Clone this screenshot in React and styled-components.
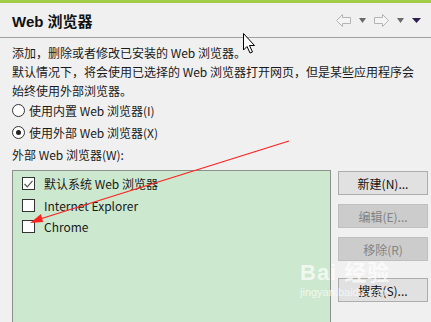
import React from 'react';
import styled, {createGlobalStyle} from 'styled-components';

const GlobalStyle = createGlobalStyle`
  html, body {
    margin: 0;
    padding: 0;
    background: #f0f0f0;
  }
  body {
    font-family: "Noto Sans CJK SC", "Noto Sans", sans-serif;
    font-size: 12px;
    color: #1a1a1a;
  }
`

const Page = styled.div`
  position: relative;
  width: 431px;
  height: 322px;
  overflow: hidden;
  display: flex;
  flex-direction: column;
`
const GreenStrip = styled.div`
  height: 3px;
  background: #a3cc48;
`
const Header = styled.div`
  height: 34px;
  display: flex;
  align-items: center;
  justify-content: space-between;
  padding: 0 10px 0 12px;
  border-bottom: 1px solid #a0a0a0;
`
const Title = styled.h1`
  margin: 0;
  font-size: 15px;
  font-weight: bold;
  color: #111;
  font-family: "Liberation Sans", "Noto Sans CJK SC", sans-serif;
`
const Nav = styled.div`
  display: flex;
  align-items: center;
  gap: 8px;
`
const Body = styled.div`
  flex: 1;
  display: flex;
  flex-direction: column;
  padding: 5px 3px 0 12px;
`
const Desc = styled.p`
  margin: 0;
  line-height: 19px;
`
const RadioRow = styled.label`
  display: flex;
  align-items: center;
  gap: 4px;
  height: 22px;
  margin-top: ${p => p.$first ? '-1px' : '0'};
`
const RadioCircle = styled.span`
  width: 11px;
  height: 11px;
  border: 1px solid #333;
  border-radius: 50%;
  background: #fff;
  display: flex;
  align-items: center;
  justify-content: center;
  &::after {
    content: '';
    display: ${p => p.$checked ? 'block' : 'none'};
    width: 5px;
    height: 5px;
    border-radius: 50%;
    background: #222;
  }
`
const GroupLabel = styled.div`
  margin-top: 1px;
  height: 22px;
  line-height: 22px;
`
const ListArea = styled.div`
  flex: 1;
  display: flex;
  gap: 7px;
  margin-top: 4px;
`
const ListBox = styled.div`
  flex: 1;
  background: #cce8cf;
  border: 1px solid #8c918c;
  border-bottom: none;
  padding: 2px 0 0 9px;
`
const CheckRow = styled.div`
  display: flex;
  align-items: center;
  gap: 9px;
  height: 21.5px;
`
const Box = styled.span`
  width: 11px;
  height: 11px;
  border: 1px solid #333;
  background: #fff;
  display: flex;
  align-items: center;
  justify-content: center;
`
const ButtonCol = styled.div`
  width: 90px;
  display: flex;
  flex-direction: column;
  padding-top: 1px;
`
const Button = styled.button`
  height: 24px;
  margin-bottom: ${p => p.$gap || 9}px;
  font-family: inherit;
  font-size: 12px;
  padding: 0;
  border: 1px solid ${p => p.disabled ? '#bfbfbf' : '#adadad'};
  background: ${p => p.disabled ? '#cccccc' : '#e1e1e1'};
  color: ${p => p.disabled ? '#838383' : '#111'};
`
const Overlay = styled.svg`
  position: absolute;
  left: 0;
  top: 0;
  pointer-events: none;
`
const Watermark = styled.div`
  position: absolute;
  left: 300px;
  top: 262px;
  color: rgba(255, 255, 255, 0.7);
  font-family: "Liberation Sans", "Noto Sans CJK SC", sans-serif;
  pointer-events: none;
  line-height: 1;
`
const WmBig = styled.div`
  font-size: 22px;
  font-weight: bold;
  letter-spacing: 1px;
`
const WmSmall = styled.div`
  font-size: 11px;
  margin-top: 3px;
`

const Arrow = ({dir}) => (
  <svg width="15" height="13" viewBox="0 0 15 13">
    {dir === 'left'
      ? <path d="M0.5 6.5 L6.5 0.5 V3.5 H14.5 V9.5 H6.5 V12.5 Z" fill="#f4f4f4" stroke="#b4b4b4"/>
      : <path d="M14.5 6.5 L8.5 0.5 V3.5 H0.5 V9.5 H8.5 V12.5 Z" fill="#f4f4f4" stroke="#b4b4b4"/>}
  </svg>
)

const Caret = ({color = '#6a6a6a', w = 7}) => (
  <svg width={w} height="5" viewBox={`0 0 ${w} 5`}>
    <path d={`M0 0 H${w} L${w / 2} 5 Z`} fill={color}/>
  </svg>
)

const browsers = [
  {name: '默认系统 Web 浏览器', checked: true},
  {name: 'Internet Explorer', checked: false},
  {name: 'Chrome', checked: false},
]

export default function App() {
  return (
    <Page>
      <GlobalStyle/>
      <GreenStrip/>
      <Header>
        <Title>Web 浏览器</Title>
        <Nav>
          <Arrow dir="left"/>
          <Caret/>
          <Arrow dir="right"/>
          <Caret/>
          <Caret color="#2e1f4f" w={9}/>
        </Nav>
      </Header>
      <Body>
        <Desc>添加，删除或者修改已安装的 Web 浏览器。</Desc>
        <Desc>默认情况下，将会使用已选择的 Web 浏览器打开网页，但是某些应用程序会<br/>始终使用外部浏览器。</Desc>
        <RadioRow $first><RadioCircle/>使用内置 Web 浏览器(I)</RadioRow>
        <RadioRow><RadioCircle $checked/>使用外部 Web 浏览器(X)</RadioRow>
        <GroupLabel>外部 Web 浏览器(W):</GroupLabel>
        <ListArea>
          <ListBox>
            {browsers.map(b => (
              <CheckRow key={b.name}>
                <Box>
                  {b.checked && (
                    <svg width="9" height="8" viewBox="0 0 9 8">
                      <path d="M0.5 4 L3.3 6.8 L8.5 0.8" fill="none" stroke="#555" strokeWidth="1.2"/>
                    </svg>
                  )}
                </Box>
                {b.name}
              </CheckRow>
            ))}
          </ListBox>
          <ButtonCol>
            <Button>新建(N)...</Button>
            <Button disabled>编辑(E)...</Button>
            <Button disabled $gap={17}>移除(R)</Button>
            <Button>搜索(S)...</Button>
          </ButtonCol>
        </ListArea>
      </Body>
      <Watermark>
        <WmBig>Bai 经验</WmBig>
        <WmSmall>jingyan.baidu.com</WmSmall>
      </Watermark>
      <Overlay width="431" height="322">
        <line x1="289" y1="141" x2="40" y2="219" stroke="#ff2020" strokeWidth="1.3"/>
        <path d="M30 223 L41 214 L43 222 Z" fill="#ff2020"/>
        <path d="M243.5 33.5 V50 L247 46.5 L250 53 L252.5 52 L249.5 45.5 L254.5 45.5 Z" fill="#fff" stroke="#000" strokeWidth="1"/>
      </Overlay>
    </Page>
  );
}
